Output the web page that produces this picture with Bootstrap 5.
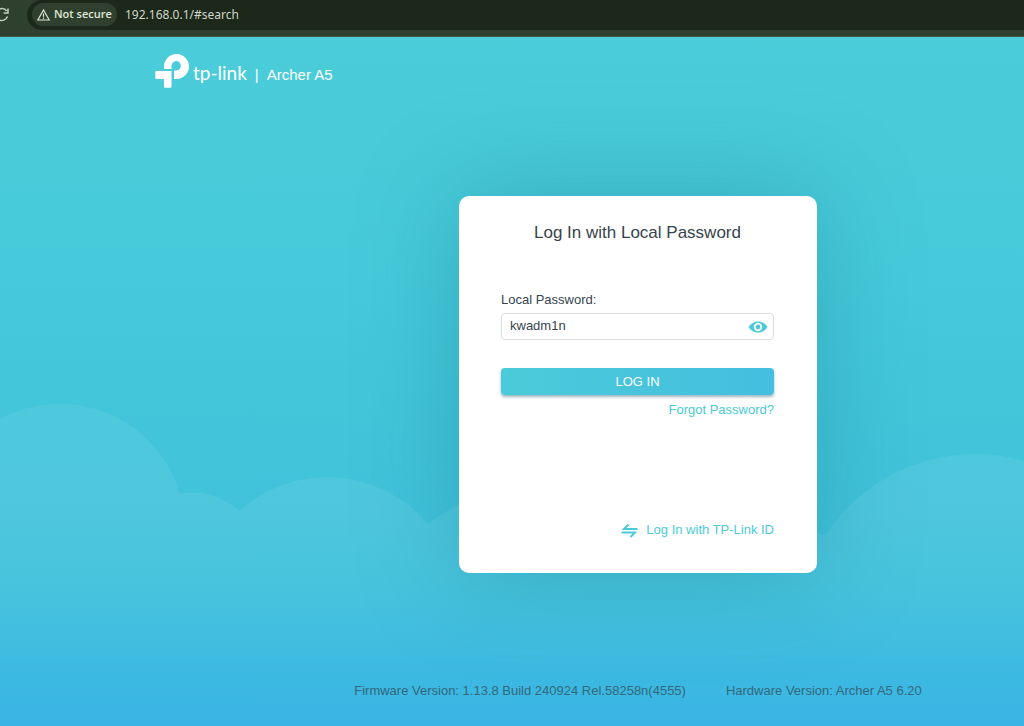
<!DOCTYPE html>
<html lang="en">
<head>
<meta charset="utf-8">
<meta name="viewport" content="width=device-width, initial-scale=1">
<title>Archer A5</title>
<link href="https://cdn.jsdelivr.net/npm/bootstrap@5.3.0/dist/css/bootstrap.min.css" rel="stylesheet">
<style>
  body { font-family: "Liberation Sans", Arial, sans-serif; font-size: 13px; line-height: 20px; color: #36444b; }
  a { color: #4acbd6; text-decoration: none; }
  .toolbar { height: 37px; background: #30402f; padding-left: 27px; padding-bottom: 7px; overflow: hidden; border-bottom: 1px solid #43574a; font-family: "Open Sans", "Noto Sans", sans-serif; }
  .reload-btn { left: -8px; top: 6px; width: 18px; height: 18px; color: #c3d0bd; }
  .address { background: #1c2819; border-radius: 15px 0 0 15px; padding: 0 5px 1px; height: 30px; }
  .chip { height: 23px; width: 85px; background: #30402f; color: #dfe8d9; border-radius: 12px; font-size: 11px; font-weight: 600; padding: 0 0 0 5px; gap: 4px; }
  .url-box { background: none; border: 0; color: #cfd6cb; font-family: "Noto Sans", sans-serif; font-size: 12px; padding: 0; margin-left: 8px; outline: 0; }
  .portal { background: linear-gradient(#4bccd9 0%, #46c9da 35%, #42c4da 58%, #40c1dc 80%, #3cb9e2 93%, #3ab4e5 100%); }
  .clouds { left: 0; bottom: 0; width: 100%; height: 330px; }
  .brand-row { padding: 16px 0 0 155px; color: #fff; height: 53px; }
  .brand-text { padding-top: 6px; }
  .wordmark { font-family: Lato, sans-serif; font-size: 19px; line-height: 24px; margin-top: -3px; }
  .model { font-size: 15px; }
  .stage { padding: 106px 0 0 252px; }
  .login-card { width: 358px; min-height: 377px; background: #fff; border-radius: 10px; padding: 25px 43px 33px 42px; box-shadow: 0 0 100px rgba(20,120,135,.36); }
  .login-card h1 { font-size: 17px; line-height: 24px; margin-bottom: 45px; }
  .pass-field { height: 27px; border: 1px solid #dcdfe0; border-radius: 4px; padding: 0 32px 2px 8px; color: #36444b; width: 100%; outline: 0; }
  .label-gap { margin-bottom: 3px; }
  .eye-btn { right: 6px; top: 4px; }
  .login-btn { height: 27px; margin-top: 28px; margin-bottom: 5px; border: 0; border-radius: 4px; color: #fff; background: linear-gradient(90deg, #4acbd9, #45bedf); box-shadow: 0 2px 3px rgba(40,90,110,.45); }
  .versions { padding: 0 0 25px 252px; gap: 40px; color: #33687a; }
</style>
</head>
<body>
<div class="d-flex flex-column min-vh-100">
  <div class="toolbar position-relative">
    <button class="reload-btn btn p-0 border-0 position-absolute d-flex" aria-label="Reload">
      <svg width="18" height="18" viewBox="0 0 18 18" fill="none" stroke="currentColor" stroke-width="1.5"><path d="M15.5 10.5a6 6 0 1 1-.8-5.5M16 2.500V7h-4.500"/></svg>
    </button>
    <div class="address d-flex align-items-center">
      <button class="chip btn d-flex align-items-center border-0 text-nowrap flex-shrink-0">
        <svg width="13" height="12" viewBox="0 0 13 12" fill="none" stroke="currentColor" stroke-width="1.200"><path d="M6.500 1 12.200 11H.8zM6.500 4.500v3.300M6.500 8.600v1.200"/></svg>
        Not secure
      </button>
      <input class="url-box flex-grow-1" type="text" value="192.168.0.1/#search" aria-label="Address">
    </div>
  </div>

  <div class="portal flex-grow-1 d-flex flex-column position-relative">
    <svg class="clouds position-absolute" viewBox="0 396 1024 330" preserveAspectRatio="none" aria-hidden="true">
      <defs><linearGradient id="mist" gradientUnits="userSpaceOnUse" x1="0" y1="396" x2="0" y2="680"><stop offset="0" stop-color="#fff" stop-opacity=".06"/><stop offset=".4" stop-color="#fff" stop-opacity=".07"/><stop offset="1" stop-color="#fff" stop-opacity="0"/></linearGradient></defs>
      <path fill="url(#mist)" d="M0 419A125 125 0 0 1 180 494A66 66 0 0 1 239 511A132 132 0 0 1 428 524Q500 470 600 475T825 536A178 178 0 0 1 1024 461V726H0Z"/>
    </svg>

    <header class="brand-row d-flex position-relative">
      <svg width="34" height="36" viewBox="0 0 34 36" fill="#fff" aria-hidden="true">
        <path d="M9 16V13.500A12.500 12.500 0 1 1 21.500 26H19V17.500H21.500A4.700 4.700 0 1 0 16.500 13V16Z"/>
        <path d="M1.500 18H16.500V33.500A1.200 1.200 0 0 1 15.300 34.700H10.200A1.200 1.200 0 0 1 9 33.500V26H1.500A1.200 1.200 0 0 1 .3 24.800V19.200A1.200 1.200 0 0 1 1.500 18Z"/>
      </svg>
      <div class="brand-text d-flex align-items-center ms-1">
        <span class="wordmark">tp-link</span><span class="model ms-2">|</span><span class="model ms-2">Archer A5</span>
      </div>
    </header>

    <main class="stage d-flex justify-content-center position-relative">
      <form class="login-card d-flex flex-column" onsubmit="return false">
        <h1 class="text-center fw-normal">Log In with Local Password</h1>
        <label for="pass" class="label-gap">Local Password:</label>
        <div class="position-relative">
          <input id="pass" class="pass-field d-block" type="text" value="kwadm1n">
          <button type="button" class="eye-btn btn p-0 border-0 position-absolute d-flex" aria-label="Hide password">
            <svg width="20" height="20" viewBox="0 0 20 20"><path fill="#4acbd6" d="M.5 10C5 2.500 15 2.500 19.500 10 15 17.500 5 17.500 .5 10Z"/><circle cx="10" cy="10" r="3.300" fill="#4acbd6" stroke="#fff" stroke-width="1.800"/></svg>
          </button>
        </div>
        <button type="submit" class="login-btn w-100 p-0">LOG IN</button>
        <a href="#forgot" class="align-self-end">Forgot Password?</a>
        <a href="#cloud" class="align-self-end mt-auto d-flex align-items-center gap-2">
          <svg width="17" height="16" viewBox="0 0 17 16" fill="none" stroke="#4acbd6" stroke-width="2"><path d="M16.500 7H3L7.500 2.500M.5 10.500H14L9.500 15"/></svg>
          Log In with TP-Link ID
        </a>
      </form>
    </main>

    <footer class="versions d-flex justify-content-center mt-auto position-relative text-nowrap">
      <span>Firmware Version: 1.13.8 Build 240924 Rel.58258n(4555)</span>
      <span>Hardware Version: Archer A5 6.20</span>
    </footer>
  </div>
</div>
<script src="https://cdn.jsdelivr.net/npm/bootstrap@5.3.0/dist/js/bootstrap.bundle.min.js"></script>
</body>
</html>
